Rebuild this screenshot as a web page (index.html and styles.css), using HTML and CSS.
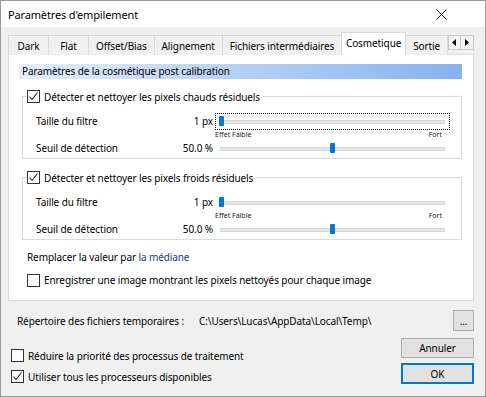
FILE: index.html
```html
<!DOCTYPE html>
<html lang="fr">
<head>
<meta charset="utf-8">
<title>Paramètres d'empilement</title>
<link rel="stylesheet" href="styles.css">
</head>
<body>
<div class="win">
  <div class="titlebar">
    <span class="title">Paramètres d'empilement</span>
    <svg class="close" width="11" height="11" viewBox="0 0 11 11"><path d="M0.5 0.5L10.5 10.5M10.5 0.5L0.5 10.5" stroke="#111" stroke-width="1"/></svg>
  </div>
  <div class="body">
    <div class="tabs">
      <div class="tab">Dark</div>
      <div class="tab">Flat</div>
      <div class="tab">Offset/Bias</div>
      <div class="tab">Alignement</div>
      <div class="tab">Fichiers intermédiaires</div>
      <div class="tab active">Cosmetique</div>
      <div class="tab">Sortie</div>
      <div class="tab-arrows">
        <span class="arr"><svg width="4" height="7" viewBox="0 0 4 7"><path d="M4 0L0 3.5L4 7Z" fill="#000"/></svg></span>
        <span class="arr"><svg width="4" height="7" viewBox="0 0 4 7"><path d="M0 0L4 3.5L0 7Z" fill="#000"/></svg></span>
      </div>
    </div>
    <div class="panel">
      <div class="hdr">Paramètres de la cosmétique post calibration</div>

      <fieldset class="grp">
        <legend class="check">
          <span class="cb checked"><svg width="11" height="11" viewBox="0 0 11 11"><path d="M1.5 5.5L4 8.5L9.5 1.5" fill="none" stroke="#222" stroke-width="1.1"/></svg></span>
          <span>Détecter et nettoyer les pixels chauds résiduels</span>
        </legend>
        <div class="srow">
          <span class="lbl">Taille du filtre</span>
          <span class="val">1 px</span>
          <div class="sl-wrap">
            <div class="slider focus"><div class="track"></div><div class="thumb" style="left:3px"></div></div>
            <div class="scale"><span>Effet Faible</span><span>Fort</span></div>
          </div>
        </div>
        <div class="srow">
          <span class="lbl">Seuil de détection</span>
          <span class="val">50.0 %</span>
          <div class="sl-wrap">
            <div class="slider"><div class="track"></div><div class="thumb" style="left:114px"></div></div>
          </div>
        </div>
      </fieldset>

      <fieldset class="grp">
        <legend class="check">
          <span class="cb checked"><svg width="11" height="11" viewBox="0 0 11 11"><path d="M1.5 5.5L4 8.5L9.5 1.5" fill="none" stroke="#222" stroke-width="1.1"/></svg></span>
          <span>Détecter et nettoyer les pixels froids résiduels</span>
        </legend>
        <div class="srow">
          <span class="lbl">Taille du filtre</span>
          <span class="val">1 px</span>
          <div class="sl-wrap">
            <div class="slider"><div class="track"></div><div class="thumb" style="left:3px"></div></div>
            <div class="scale"><span>Effet Faible</span><span>Fort</span></div>
          </div>
        </div>
        <div class="srow">
          <span class="lbl">Seuil de détection</span>
          <span class="val">50.0 %</span>
          <div class="sl-wrap">
            <div class="slider"><div class="track"></div><div class="thumb" style="left:114px"></div></div>
          </div>
        </div>
      </fieldset>

      <div class="line replace">Remplacer la valeur par <span class="link">la médiane</span></div>
      <div class="line check">
        <span class="cb"></span>
        <span>Enregistrer une image montrant les pixels nettoyés pour chaque image</span>
      </div>
    </div>

    <div class="dirrow">
      <span class="dirlbl">Répertoire des fichiers temporaires :</span>
      <span class="dirpath">C:\Users\Lucas\AppData\Local\Temp\</span>
      <button class="btn small">...</button>
    </div>

    <div class="bottom">
      <div class="checks">
        <div class="check">
          <span class="cb"></span>
          <span>Réduire la priorité des processus de traitement</span>
        </div>
        <div class="check">
          <span class="cb checked"><svg width="11" height="11" viewBox="0 0 11 11"><path d="M1.5 5.5L4 8.5L9.5 1.5" fill="none" stroke="#222" stroke-width="1.1"/></svg></span>
          <span>Utiliser tous les processeurs disponibles</span>
        </div>
      </div>
      <div class="buttons">
        <button class="btn">Annuler</button>
        <button class="btn default">OK</button>
      </div>
    </div>
  </div>
</div>
</body>
</html>
```
FILE: styles.css
```css
* { box-sizing: border-box; }

body {
  margin: 0;
  font-family: "Noto Sans", "Open Sans", sans-serif;
  font-size: 10px;
  letter-spacing: -0.1px;
  color: #000;
  background: #f0f0f0;
}

.win {
  width: 486px;
  height: 397px;
  border: 1px solid #9a9a9a;
  background: #f0f0f0;
  display: flex;
  flex-direction: column;
}

.titlebar {
  height: 26px;
  background: #fff;
  display: flex;
  align-items: center;
  justify-content: space-between;
  padding: 0 38px 0 7px;
  flex: none;
}

.title { font-size: 11px; letter-spacing: -0.15px; }

.body {
  flex: 1;
  padding: 6px 11px 0 7px;
}

/* tabs */
.tabs {
  display: flex;
  align-items: flex-end;
  height: 22px;
  position: relative;
  z-index: 1;
  margin-bottom: -1px;
  white-space: nowrap;
}

.tab {
  height: 20px;
  min-width: 40px;
  padding: 0 7px;
  display: flex;
  align-items: center;
  justify-content: center;
  border: 1px solid #d9d9d9;
  border-left: none;
  border-bottom: none;
  background: #f0f0f0;
}

.tab:first-child { border-left: 1px solid #d9d9d9; min-width: 41px; }

.tab.active {
  height: 23px;
  background: #fff;
  border-left: 1px solid #d9d9d9;
  margin-left: -1px;
  padding: 0 4px 2px;
}

.tab-arrows {
  display: flex;
  align-self: flex-start;
  margin: 2px 0 0 0;
}

.arr {
  width: 13px;
  height: 15px;
  border: 1px solid #c8c8c8;
  background: #f4f4f4;
  display: flex;
  align-items: center;
  justify-content: center;
}

.arr + .arr { border-left: none; }

/* panel */
.panel {
  height: 247px;
  background: #fff;
  border: 1px solid #d9d9d9;
  padding: 9px 11px 0 10px;
}

.hdr {
  height: 15px;
  line-height: 15px;
  padding-left: 3px;
  background: linear-gradient(to right, #e4eefb, #86b2ef);
}

.grp {
  margin: 10px 0 0 3px;
  padding: 0 11px 1px 13px;
  border: 1px solid #dcdcdc;
  min-width: 0;
}

.grp + .grp { margin-top: 11px; }

.grp legend {
  margin-left: -9px;
  padding: 0 3px 0 0;
}

.check {
  display: flex;
  align-items: center;
  gap: 4px;
  height: 15px;
  white-space: nowrap;
}

.cb {
  width: 13px;
  height: 13px;
  border: 1px solid #333;
  background: #fff;
  display: flex;
  align-items: center;
  justify-content: center;
  flex: none;
}

.srow {
  display: grid;
  grid-template-columns: 1fr auto 235px;
  align-items: start;
}

.srow:first-of-type { margin-top: 9px; }

.lbl, .val {
  height: 17px;
  line-height: 17px;
}

.val { padding-right: 2px; }

.slider {
  position: relative;
  height: 17px;
  border: 1px solid transparent;
  padding: 6px 4px 0;
}

.slider.focus { border: 1px dotted #111; }

.track {
  height: 4px;
  background: #e7e7e7;
  border: 1px solid #d6d6d6;
}

.thumb {
  position: absolute;
  top: 2px;
  width: 5px;
  height: 10px;
  background: #0078d7;
  border-radius: 1px;
}

.scale {
  display: flex;
  justify-content: space-between;
  font-size: 7px;
  letter-spacing: 0;
  height: 10px;
  line-height: 10px;
  padding-right: 8px;
  color: #222;
}

.line {
  margin-left: 8px;
  height: 15px;
  line-height: 15px;
}

.replace { margin-top: 10px; }
.line.check { margin-top: 8px; }

.link { color: #22338f; }

/* bottom */
.dirrow {
  display: flex;
  align-items: center;
  margin-top: 9px;
  height: 21px;
  padding-left: 9px;
  white-space: nowrap;
}

.dirlbl { width: 182px; }
.dirpath { flex: 1; }

.btn {
  font-family: inherit;
  font-size: 10px;
  letter-spacing: -0.1px;
  color: #000;
  background: #e1e1e1;
  border: 1px solid #adadad;
  padding: 0;
  width: 73px;
  height: 20px;
}

.btn.small { width: 21px; height: 21px; }

.btn.default {
  height: 21px;
  border: 2px solid #0078d7;
}

.bottom {
  display: flex;
  justify-content: space-between;
  margin-top: 7px;
}

.checks {
  display: flex;
  flex-direction: column;
  gap: 6px;
  padding: 10px 0 0 3px;
}

.buttons {
  display: flex;
  flex-direction: column;
  gap: 5px;
}
```
